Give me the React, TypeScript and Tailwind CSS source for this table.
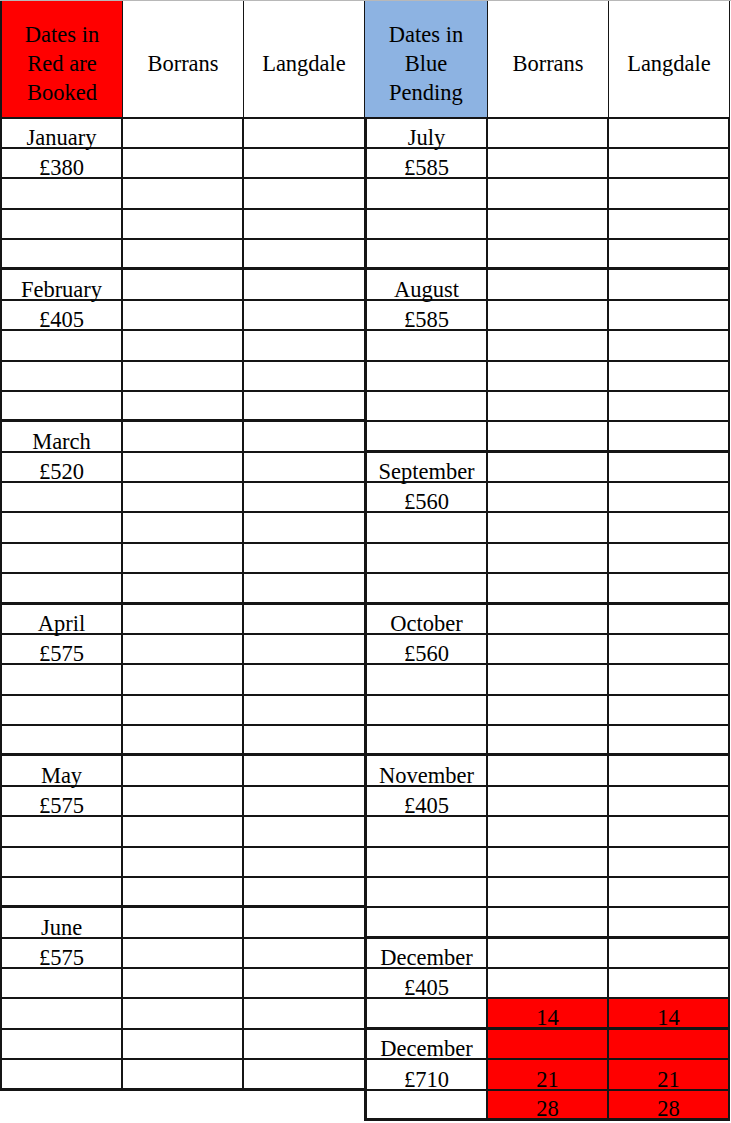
import React from "react";

type Row = { label?: string; b?: string; l?: string; red?: boolean };

const month = (name: string, price: string, n: number): Row[] => [
  { label: name },
  { label: price },
  ...Array.from({ length: n - 2 }, () => ({})),
];

const leftGroups: Row[][] = [
  month("January", "£380", 5),
  month("February", "£405", 5),
  month("March", "£520", 6),
  month("April", "£575", 5),
  month("May", "£575", 5),
  month("June", "£575", 6),
];

const rightGroups: Row[][] = [
  month("July", "£585", 5),
  month("August", "£585", 6),
  month("September", "£560", 5),
  month("October", "£560", 5),
  month("November", "£405", 6),
  [{ label: "December" }, { label: "£405" }, { red: true, b: "14", l: "14" }],
  [
    { label: "December", red: true },
    { label: "£710", red: true, b: "21", l: "21" },
    { red: true, b: "28", l: "28" },
  ],
];

// 30.375px rows, rounded so the lines land on whole pixels
const rowHeight = (i: number) =>
  Math.floor(((i + 1) * 3) / 8) > Math.floor((i * 3) / 8) ? "h-[31px]" : "h-[30px]";

const Cell = ({
  text,
  red,
  last,
  width,
}: {
  text?: string;
  red?: boolean;
  last?: boolean;
  width: string;
}) => (
  <div
    className={`${width} h-full flex items-end justify-center text-center leading-[19px] ${
      last ? "" : "border-r-2 border-[#151515]"
    } ${red ? "bg-[#ff0000]" : ""}`}
  >
    {text}
  </div>
);

const Body = ({ groups, right }: { groups: Row[][]; right?: boolean }) => {
  let idx = 0;
  return (
    <div className="flex flex-col">
      {groups.map((rows, g) =>
        rows.map((row, r) => {
          const i = idx++;
          const end = r === rows.length - 1;
          return (
            <div
              key={`${g}-${r}`}
              className={`flex ${rowHeight(i)} border-[#151515] ${
                end ? "border-b-[3px]" : "border-b-2"
              } ${right ? "border-l-[3px]" : "border-l-2"}`}
            >
              <Cell width="w-[121px]" text={row.label} />
              <Cell width="w-[121px]" text={row.b} red={row.red} />
              <Cell width={right ? "w-[121px]" : "w-[120px]"} text={row.l} red={row.red} last={!right} />
            </div>
          );
        })
      )}
    </div>
  );
};

const HeaderCell = ({
  children,
  width,
  bg,
  last,
}: {
  children: React.ReactNode;
  width: string;
  bg?: string;
  last?: boolean;
}) => (
  <div
    className={`${width} h-full flex items-center justify-center text-center leading-[29px] pt-[9px] ${
      last ? "" : "border-r border-[#151515]"
    } ${bg ?? ""}`}
  >
    <div>{children}</div>
  </div>
);

export default function App() {
  return (
    <div className="w-[731px] h-[1123px] bg-white text-black text-[22.5px] font-['Liberation_Serif','Times_New_Roman',serif] overflow-hidden">
      <div className="flex items-start border-t border-[#b8b8b8]">
        <div className="w-[364px] flex flex-col">
          <div className="flex h-[118px] border-l-2 border-b-2 border-[#151515]">
            <HeaderCell width="w-[121px]" bg="bg-[#ff0000]">
              Dates in
              <br />
              Red are
              <br />
              Booked
            </HeaderCell>
            <HeaderCell width="w-[121px]">Borrans</HeaderCell>
            <HeaderCell width="w-[120px]" last>
              Langdale
            </HeaderCell>
          </div>
          <Body groups={leftGroups} />
        </div>

        <div className="w-[366px] flex flex-col">
          <div className="flex h-[118px] border-l border-b-2 border-[#151515]">
            <HeaderCell width="w-[123px]" bg="bg-[#8db3e2]">
              Dates in
              <br />
              Blue
              <br />
              Pending
            </HeaderCell>
            <HeaderCell width="w-[121px]">Borrans</HeaderCell>
            <HeaderCell width="w-[121px]">Langdale</HeaderCell>
          </div>
          <Body groups={rightGroups} right />
        </div>
      </div>
    </div>
  );
}
